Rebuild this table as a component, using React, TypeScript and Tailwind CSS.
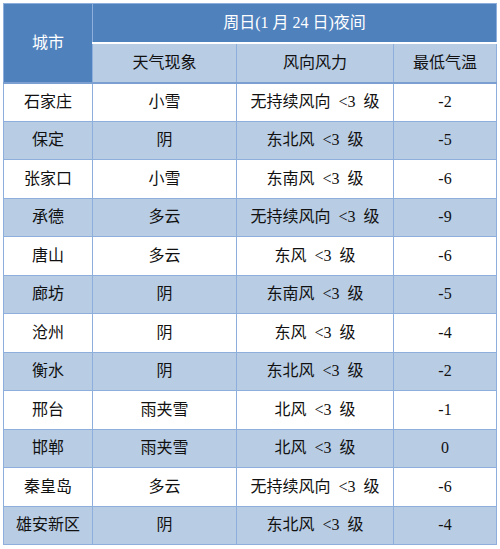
const rows = [
  { city: "石家庄", weather: "小雪", wind: "无持续风向 <3 级", temp: "-2" },
  { city: "保定", weather: "阴", wind: "东北风 <3 级", temp: "-5" },
  { city: "张家口", weather: "小雪", wind: "东南风 <3 级", temp: "-6" },
  { city: "承德", weather: "多云", wind: "无持续风向 <3 级", temp: "-9" },
  { city: "唐山", weather: "多云", wind: "东风 <3 级", temp: "-6" },
  { city: "廊坊", weather: "阴", wind: "东南风 <3 级", temp: "-5" },
  { city: "沧州", weather: "阴", wind: "东风 <3 级", temp: "-4" },
  { city: "衡水", weather: "阴", wind: "东北风 <3 级", temp: "-2" },
  { city: "邢台", weather: "雨夹雪", wind: "北风 <3 级", temp: "-1" },
  { city: "邯郸", weather: "雨夹雪", wind: "北风 <3 级", temp: "0" },
  { city: "秦皇岛", weather: "多云", wind: "无持续风向 <3 级", temp: "-6" },
  { city: "雄安新区", weather: "阴", wind: "东北风 <3 级", temp: "-4" },
];

export default function App() {
  return (
    <div
      className="w-[500px] h-[549px] bg-white pt-[3px] pl-[3px]"
      style={{ fontFamily: '"Liberation Serif", "Noto Sans CJK SC", serif' }}
    >
      <table className="w-[493px] table-fixed border-collapse text-[16px] text-[#111] border border-[#8eaedb]">
        <colgroup>
          <col className="w-[89px]" />
          <col className="w-[144px]" />
          <col className="w-[157px]" />
          <col className="w-[103px]" />
        </colgroup>
        <thead>
          <tr className="h-[39px]">
            <th
              rowSpan={2}
              className="bg-[#4f81bd] text-white font-normal border-r border-[#8eaedb] border-b-2 border-b-[#7a9fd0]"
            >
              城市
            </th>
            <th
              colSpan={3}
              className="bg-[#4f81bd] text-white font-normal border-b-2 border-b-white"
            >
              周日(1 月 24 日)夜间
            </th>
          </tr>
          <tr className="h-[40px] bg-[#b8cce4]">
            <th className="font-normal border-r border-[#8eaedb] border-b-2 border-b-[#7a9fd0]">天气现象</th>
            <th className="font-normal border-r border-[#8eaedb] border-b-2 border-b-[#7a9fd0]">风向风力</th>
            <th className="font-normal border-b-2 border-b-[#7a9fd0]">最低气温</th>
          </tr>
        </thead>
        <tbody>
          {rows.map((r, i) => (
            <tr
              key={r.city}
              className={`h-[38.5px] ${i % 2 === 1 ? "bg-[#b8cce4]" : "bg-white"}`}
            >
              <td className="text-center border border-[#8eaedb]">{r.city}</td>
              <td className="text-center border border-[#8eaedb]">{r.weather}</td>
              <td className="text-center border border-[#8eaedb] [word-spacing:4px]">{r.wind}</td>
              <td className="text-center border border-[#8eaedb]">{r.temp}</td>
            </tr>
          ))}
        </tbody>
      </table>
    </div>
  );
}
